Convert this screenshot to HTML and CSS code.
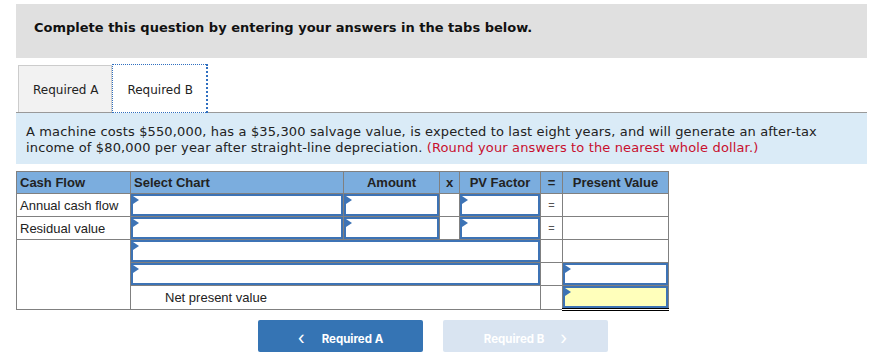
FILE: index.html
```html
<!DOCTYPE html>
<html lang="en">

<head>
    <meta charset="UTF-8">
    <meta name="viewport" content="width=device-width, initial-scale=1.0">
    <title>Required B</title>
    <link rel="stylesheet" href="styles.css">
</head>

<body>
    <div class="page">
        <div class="instructions">Complete this question by entering your answers in the tabs below.</div>

        <div class="tabs">
            <div class="tab">Required A</div>
            <div class="tab active">Required B</div>
        </div>

        <div class="prompt">
            A machine costs $550,000, has a $35,300 salvage value, is expected to last eight years, and will generate an after-tax
            income of $80,000 per year after straight-line depreciation. <span class="hint">(Round your answers to the nearest whole dollar.)</span>
        </div>

        <table class="chart">
            <colgroup>
                <col class="c-flow">
                <col class="c-chart">
                <col class="c-amt">
                <col class="c-x">
                <col class="c-pv">
                <col class="c-eq">
                <col class="c-val">
            </colgroup>
            <thead>
                <tr>
                    <th>Cash Flow</th>
                    <th>Select Chart</th>
                    <th class="center">Amount</th>
                    <th class="center">x</th>
                    <th class="center">PV Factor</th>
                    <th class="center">=</th>
                    <th class="center">Present Value</th>
                </tr>
            </thead>
            <tbody>
                <tr>
                    <td>Annual cash flow</td>
                    <td class="in"><div class="field"></div></td>
                    <td class="in"><div class="field"></div></td>
                    <td></td>
                    <td class="in"><div class="field"></div></td>
                    <td class="eq">=</td>
                    <td></td>
                </tr>
                <tr>
                    <td>Residual value</td>
                    <td class="in"><div class="field"></div></td>
                    <td class="in"><div class="field"></div></td>
                    <td></td>
                    <td class="in"><div class="field"></div></td>
                    <td class="eq">=</td>
                    <td></td>
                </tr>
                <tr>
                    <td rowspan="3"></td>
                    <td colspan="4" class="in"><div class="field"></div></td>
                    <td></td>
                    <td class="total"></td>
                </tr>
                <tr>
                    <td colspan="4" class="in"><div class="field"></div></td>
                    <td></td>
                    <td class="in"><div class="field"></div></td>
                </tr>
                <tr>
                    <td colspan="4" class="npv">Net present value</td>
                    <td></td>
                    <td class="in grand"><div class="field yellow"></div></td>
                </tr>
            </tbody>
        </table>

        <div class="nav">
            <button class="btn prev"><span class="chev left">&lsaquo;</span>Required A</button>
            <button class="btn next">Required B<span class="chev right">&rsaquo;</span></button>
        </div>
    </div>
</body>

</html>
```

FILE: styles.css
```css
* {
    margin: 0;
    padding: 0;
    box-sizing: border-box;
}

body {
    background-color: #fff;
    color: #222;
    font-family: "DejaVu Sans", Verdana, sans-serif;
}

.page {
    width: 867px;
    padding: 4px 0 0 16px;
}

.instructions {
    background-color: #e0e0e0;
    height: 54px;
    padding: 16px 0 0 18px;
    font-size: 13px;
    font-weight: bold;
    color: #111;
}

.tabs {
    display: flex;
    align-items: flex-end;
    margin-top: 6px;
    padding-left: 2px;
    border-bottom: 1px solid #999;
}

.tab {
    height: 47px;
    padding: 17px 13px 0 14px;
    font-size: 12px;
    background-color: #f2f2f2;
    border: 1px solid #ccc;
    border-bottom: none;
}

.tab.active {
    height: 49px;
    margin-bottom: -1px;
    padding-top: 18px;
    background-color: #fff;
    border: 1px dotted #2f6fc0;
    border-width: 1px 2px 1px 1px;
    width: 96px;
}

.prompt {
    background-color: #daebf7;
    height: 51px;
    padding: 11px 40px 0 10px;
    font-size: 13px;
    line-height: 16px;
    letter-spacing: 0.14px;
    color: #222;
}

.prompt .hint {
    color: #c8102e;
}

table.chart {
    margin-top: 7px;
    width: 652px;
    table-layout: fixed;
    border-collapse: collapse;
    font-family: "Liberation Sans", Arial, sans-serif;
    font-size: 13px;
    color: #222;
}

.c-flow { width: 114px; }
.c-chart { width: 213px; }
.c-amt { width: 96px; }
.c-x { width: 20px; }
.c-pv { width: 81px; }
.c-eq { width: 22px; }
.c-val { width: 106px; }

table.chart th {
    height: 22px;
    background-color: #7badde;
    border: 1px solid #808080;
    text-align: left;
    padding: 0 3px;
    font-weight: bold;
}

table.chart th.center {
    text-align: center;
}

table.chart td {
    height: 23px;
    border: 1px solid #808080;
    padding: 0 3px;
}

table.chart td.in {
    padding: 0;
}

table.chart td.eq {
    text-align: center;
    font-size: 11px;
    color: #555;
}

table.chart td.total {
    border-top: 1px solid #000;
}

table.chart td.grand {
    border-bottom: 3px double #000;
}

table.chart td.npv {
    padding-left: 34px;
}

.field {
    position: relative;
    height: 22px;
    border: 2px solid #3d73b5;
    background-color: #fff;
}

.field::before {
    content: "";
    position: absolute;
    top: 0;
    left: 0;
    border-left: 6px solid #3d73b5;
    border-top: 4px solid transparent;
    border-bottom: 4px solid transparent;
}

.field.yellow {
    background-color: #ffffbb;
}

.nav {
    display: flex;
    gap: 20px;
    margin-top: 9px;
    padding-left: 242px;
}

.btn {
    width: 165px;
    height: 32px;
    border: none;
    border-radius: 2px;
    font-family: Inter, Roboto, sans-serif;
    font-size: 11.5px;
    font-weight: bold;
    color: #fff;
}

.btn .chev {
    font-size: 18px;
    font-weight: normal;
    position: relative;
    top: 1px;
}

.btn .chev.left {
    margin-right: 17px;
}

.btn .chev.right {
    margin-left: 16px;
}

.btn.prev {
    background-color: #3574b4;
}

.btn.next {
    background-color: #d9e4f1;
}
```
